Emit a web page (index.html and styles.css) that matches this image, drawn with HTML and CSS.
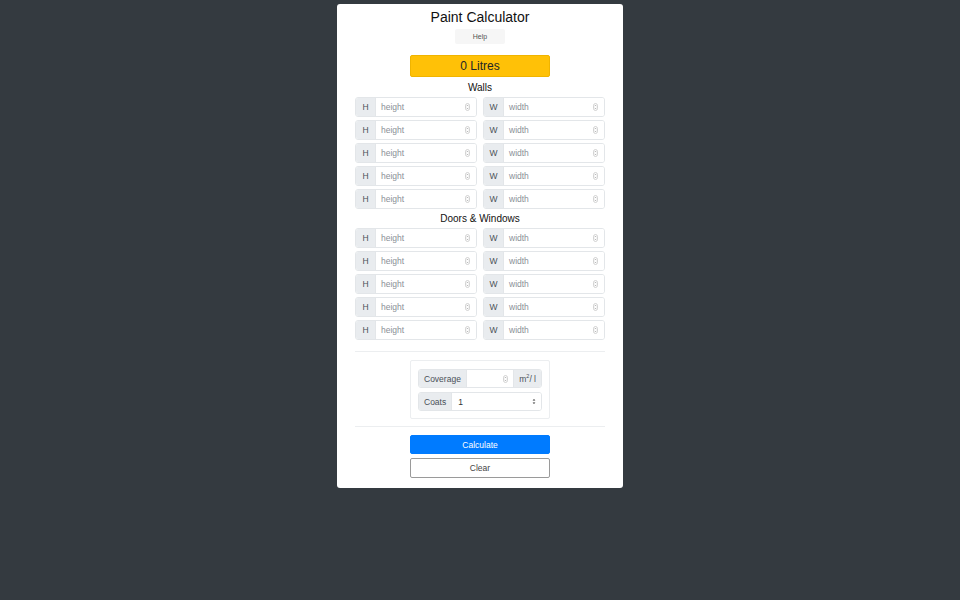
FILE: index.html
```html
<!DOCTYPE html>
<html>
<head>
<meta charset="utf-8">
<link rel="stylesheet" href="styles.css">
</head>
<body>
<div class="card">
  <h1 class="title">Paint Calculator</h1>
  <button class="btn-help">Help</button>
  <div class="result">0 Litres</div>

  <h2 class="section">Walls</h2>
  <div class="rows">
    <div class="row">
      <div class="group"><span class="pre">H</span><div class="field"><span class="ph">height</span><svg class="spin" viewBox="0 0 5 8"><rect x="0.5" y="0.5" width="4" height="7" rx="2" fill="none" stroke="#b8b8b8" stroke-width="0.6"/><path d="M1.6 3.2 L2.5 2.2 L3.4 3.2 M1.6 4.8 L2.5 5.8 L3.4 4.8" fill="none" stroke="#888" stroke-width="0.6"/></svg></div></div>
      <div class="group"><span class="pre">W</span><div class="field"><span class="ph">width</span><svg class="spin" viewBox="0 0 5 8"><rect x="0.5" y="0.5" width="4" height="7" rx="2" fill="none" stroke="#b8b8b8" stroke-width="0.6"/><path d="M1.6 3.2 L2.5 2.2 L3.4 3.2 M1.6 4.8 L2.5 5.8 L3.4 4.8" fill="none" stroke="#888" stroke-width="0.6"/></svg></div></div>
    </div>
    <div class="row">
      <div class="group"><span class="pre">H</span><div class="field"><span class="ph">height</span><svg class="spin" viewBox="0 0 5 8"><rect x="0.5" y="0.5" width="4" height="7" rx="2" fill="none" stroke="#b8b8b8" stroke-width="0.6"/><path d="M1.6 3.2 L2.5 2.2 L3.4 3.2 M1.6 4.8 L2.5 5.8 L3.4 4.8" fill="none" stroke="#888" stroke-width="0.6"/></svg></div></div>
      <div class="group"><span class="pre">W</span><div class="field"><span class="ph">width</span><svg class="spin" viewBox="0 0 5 8"><rect x="0.5" y="0.5" width="4" height="7" rx="2" fill="none" stroke="#b8b8b8" stroke-width="0.6"/><path d="M1.6 3.2 L2.5 2.2 L3.4 3.2 M1.6 4.8 L2.5 5.8 L3.4 4.8" fill="none" stroke="#888" stroke-width="0.6"/></svg></div></div>
    </div>
    <div class="row">
      <div class="group"><span class="pre">H</span><div class="field"><span class="ph">height</span><svg class="spin" viewBox="0 0 5 8"><rect x="0.5" y="0.5" width="4" height="7" rx="2" fill="none" stroke="#b8b8b8" stroke-width="0.6"/><path d="M1.6 3.2 L2.5 2.2 L3.4 3.2 M1.6 4.8 L2.5 5.8 L3.4 4.8" fill="none" stroke="#888" stroke-width="0.6"/></svg></div></div>
      <div class="group"><span class="pre">W</span><div class="field"><span class="ph">width</span><svg class="spin" viewBox="0 0 5 8"><rect x="0.5" y="0.5" width="4" height="7" rx="2" fill="none" stroke="#b8b8b8" stroke-width="0.6"/><path d="M1.6 3.2 L2.5 2.2 L3.4 3.2 M1.6 4.8 L2.5 5.8 L3.4 4.8" fill="none" stroke="#888" stroke-width="0.6"/></svg></div></div>
    </div>
    <div class="row">
      <div class="group"><span class="pre">H</span><div class="field"><span class="ph">height</span><svg class="spin" viewBox="0 0 5 8"><rect x="0.5" y="0.5" width="4" height="7" rx="2" fill="none" stroke="#b8b8b8" stroke-width="0.6"/><path d="M1.6 3.2 L2.5 2.2 L3.4 3.2 M1.6 4.8 L2.5 5.8 L3.4 4.8" fill="none" stroke="#888" stroke-width="0.6"/></svg></div></div>
      <div class="group"><span class="pre">W</span><div class="field"><span class="ph">width</span><svg class="spin" viewBox="0 0 5 8"><rect x="0.5" y="0.5" width="4" height="7" rx="2" fill="none" stroke="#b8b8b8" stroke-width="0.6"/><path d="M1.6 3.2 L2.5 2.2 L3.4 3.2 M1.6 4.8 L2.5 5.8 L3.4 4.8" fill="none" stroke="#888" stroke-width="0.6"/></svg></div></div>
    </div>
    <div class="row">
      <div class="group"><span class="pre">H</span><div class="field"><span class="ph">height</span><svg class="spin" viewBox="0 0 5 8"><rect x="0.5" y="0.5" width="4" height="7" rx="2" fill="none" stroke="#b8b8b8" stroke-width="0.6"/><path d="M1.6 3.2 L2.5 2.2 L3.4 3.2 M1.6 4.8 L2.5 5.8 L3.4 4.8" fill="none" stroke="#888" stroke-width="0.6"/></svg></div></div>
      <div class="group"><span class="pre">W</span><div class="field"><span class="ph">width</span><svg class="spin" viewBox="0 0 5 8"><rect x="0.5" y="0.5" width="4" height="7" rx="2" fill="none" stroke="#b8b8b8" stroke-width="0.6"/><path d="M1.6 3.2 L2.5 2.2 L3.4 3.2 M1.6 4.8 L2.5 5.8 L3.4 4.8" fill="none" stroke="#888" stroke-width="0.6"/></svg></div></div>
    </div>
  </div>

  <h2 class="section section-doors">Doors &amp; Windows</h2>
  <div class="rows">
    <div class="row">
      <div class="group"><span class="pre">H</span><div class="field"><span class="ph">height</span><svg class="spin" viewBox="0 0 5 8"><rect x="0.5" y="0.5" width="4" height="7" rx="2" fill="none" stroke="#b8b8b8" stroke-width="0.6"/><path d="M1.6 3.2 L2.5 2.2 L3.4 3.2 M1.6 4.8 L2.5 5.8 L3.4 4.8" fill="none" stroke="#888" stroke-width="0.6"/></svg></div></div>
      <div class="group"><span class="pre">W</span><div class="field"><span class="ph">width</span><svg class="spin" viewBox="0 0 5 8"><rect x="0.5" y="0.5" width="4" height="7" rx="2" fill="none" stroke="#b8b8b8" stroke-width="0.6"/><path d="M1.6 3.2 L2.5 2.2 L3.4 3.2 M1.6 4.8 L2.5 5.8 L3.4 4.8" fill="none" stroke="#888" stroke-width="0.6"/></svg></div></div>
    </div>
    <div class="row">
      <div class="group"><span class="pre">H</span><div class="field"><span class="ph">height</span><svg class="spin" viewBox="0 0 5 8"><rect x="0.5" y="0.5" width="4" height="7" rx="2" fill="none" stroke="#b8b8b8" stroke-width="0.6"/><path d="M1.6 3.2 L2.5 2.2 L3.4 3.2 M1.6 4.8 L2.5 5.8 L3.4 4.8" fill="none" stroke="#888" stroke-width="0.6"/></svg></div></div>
      <div class="group"><span class="pre">W</span><div class="field"><span class="ph">width</span><svg class="spin" viewBox="0 0 5 8"><rect x="0.5" y="0.5" width="4" height="7" rx="2" fill="none" stroke="#b8b8b8" stroke-width="0.6"/><path d="M1.6 3.2 L2.5 2.2 L3.4 3.2 M1.6 4.8 L2.5 5.8 L3.4 4.8" fill="none" stroke="#888" stroke-width="0.6"/></svg></div></div>
    </div>
    <div class="row">
      <div class="group"><span class="pre">H</span><div class="field"><span class="ph">height</span><svg class="spin" viewBox="0 0 5 8"><rect x="0.5" y="0.5" width="4" height="7" rx="2" fill="none" stroke="#b8b8b8" stroke-width="0.6"/><path d="M1.6 3.2 L2.5 2.2 L3.4 3.2 M1.6 4.8 L2.5 5.8 L3.4 4.8" fill="none" stroke="#888" stroke-width="0.6"/></svg></div></div>
      <div class="group"><span class="pre">W</span><div class="field"><span class="ph">width</span><svg class="spin" viewBox="0 0 5 8"><rect x="0.5" y="0.5" width="4" height="7" rx="2" fill="none" stroke="#b8b8b8" stroke-width="0.6"/><path d="M1.6 3.2 L2.5 2.2 L3.4 3.2 M1.6 4.8 L2.5 5.8 L3.4 4.8" fill="none" stroke="#888" stroke-width="0.6"/></svg></div></div>
    </div>
    <div class="row">
      <div class="group"><span class="pre">H</span><div class="field"><span class="ph">height</span><svg class="spin" viewBox="0 0 5 8"><rect x="0.5" y="0.5" width="4" height="7" rx="2" fill="none" stroke="#b8b8b8" stroke-width="0.6"/><path d="M1.6 3.2 L2.5 2.2 L3.4 3.2 M1.6 4.8 L2.5 5.8 L3.4 4.8" fill="none" stroke="#888" stroke-width="0.6"/></svg></div></div>
      <div class="group"><span class="pre">W</span><div class="field"><span class="ph">width</span><svg class="spin" viewBox="0 0 5 8"><rect x="0.5" y="0.5" width="4" height="7" rx="2" fill="none" stroke="#b8b8b8" stroke-width="0.6"/><path d="M1.6 3.2 L2.5 2.2 L3.4 3.2 M1.6 4.8 L2.5 5.8 L3.4 4.8" fill="none" stroke="#888" stroke-width="0.6"/></svg></div></div>
    </div>
    <div class="row">
      <div class="group"><span class="pre">H</span><div class="field"><span class="ph">height</span><svg class="spin" viewBox="0 0 5 8"><rect x="0.5" y="0.5" width="4" height="7" rx="2" fill="none" stroke="#b8b8b8" stroke-width="0.6"/><path d="M1.6 3.2 L2.5 2.2 L3.4 3.2 M1.6 4.8 L2.5 5.8 L3.4 4.8" fill="none" stroke="#888" stroke-width="0.6"/></svg></div></div>
      <div class="group"><span class="pre">W</span><div class="field"><span class="ph">width</span><svg class="spin" viewBox="0 0 5 8"><rect x="0.5" y="0.5" width="4" height="7" rx="2" fill="none" stroke="#b8b8b8" stroke-width="0.6"/><path d="M1.6 3.2 L2.5 2.2 L3.4 3.2 M1.6 4.8 L2.5 5.8 L3.4 4.8" fill="none" stroke="#888" stroke-width="0.6"/></svg></div></div>
    </div>
  </div>

  <hr class="divider divider-top">

  <div class="settings">
    <div class="group group-cov">
      <span class="pre pre-wide">Coverage</span>
      <div class="field field-cov"><span class="ph"></span><svg class="spin" viewBox="0 0 5 8"><rect x="0.5" y="0.5" width="4" height="7" rx="2" fill="none" stroke="#b8b8b8" stroke-width="0.6"/><path d="M1.6 3.2 L2.5 2.2 L3.4 3.2 M1.6 4.8 L2.5 5.8 L3.4 4.8" fill="none" stroke="#888" stroke-width="0.6"/></svg></div>
      <span class="post">m<span class="sup">2</span>/ l</span>
    </div>
    <div class="group group-coats">
      <span class="pre pre-wide">Coats</span>
      <div class="field field-select"><span class="val">1</span><svg class="sel" viewBox="0 0 4 7"><path d="M0.6 2.6 L2 1 L3.4 2.6 Z M0.6 4.4 L2 6 L3.4 4.4 Z" fill="#333"/></svg></div>
    </div>
  </div>

  <hr class="divider divider-bottom">

  <div class="actions">
    <button class="btn btn-primary">Calculate</button>
    <button class="btn btn-outline">Clear</button>
  </div>
</div>
</body>
</html>
```

FILE: styles.css
```css
html, body {
  margin: 0;
  padding: 0;
  background: #343a40;
  font-family: "Liberation Sans", Arial, sans-serif;
  color: #212529;
}

.card {
  width: 286px;
  margin: 4px auto 0;
  background: #fff;
  border-radius: 3px;
  padding: 3px 18px 10px;
  box-sizing: border-box;
  display: flex;
  flex-direction: column;
  align-items: center;
}

.title {
  margin: 0;
  font-size: 14px;
  font-weight: 400;
  line-height: 20px;
  color: #111;
}

.btn-help {
  margin-top: 2px;
  width: 50px;
  height: 15px;
  border: none;
  border-radius: 2px;
  background: #f6f6f6;
  font-family: inherit;
  font-size: 7px;
  color: #555;
  padding: 0;
}

.result {
  margin-top: 11px;
  width: 140px;
  height: 22px;
  box-sizing: border-box;
  background: #ffc107;
  border: 1px solid #f0b400;
  border-radius: 2px;
  font-size: 12px;
  line-height: 20px;
  text-align: center;
  color: #212529;
}

.section {
  margin: 3px 0 1px;
  font-size: 10px;
  font-weight: 400;
  line-height: 16px;
  color: #111;
}

.section-doors {
  margin-top: 2px;
}

.rows {
  width: 250px;
  display: flex;
  flex-direction: column;
  gap: 3px;
}

.row {
  display: flex;
  gap: 6px;
}

.group {
  flex: 1;
  display: flex;
  height: 20px;
  box-sizing: border-box;
  border: 1px solid #e3e6e9;
  border-radius: 3px;
  overflow: hidden;
  font-size: 8.5px;
}

.pre {
  width: 19px;
  flex: none;
  background: #e9ecef;
  border-right: 1px solid #e3e6e9;
  display: flex;
  align-items: center;
  justify-content: center;
  color: #495057;
}

.field {
  flex: 1;
  display: flex;
  align-items: center;
  padding: 0 6px 0 5px;
  background: #fff;
}

.ph {
  flex: 1;
  color: #8a9097;
}

.spin {
  width: 5px;
  height: 8px;
  flex: none;
}

.divider {
  width: 250px;
  border: none;
  border-top: 1px solid #eceef0;
  margin: 0;
}

.divider-top {
  margin-top: 11px;
}

.settings {
  margin-top: 8px;
  width: 140px;
  box-sizing: border-box;
  border: 1px solid #eceef0;
  border-radius: 2px;
  padding: 8px 7px 7px;
  display: flex;
  flex-direction: column;
  gap: 4px;
}

.settings .group {
  flex: none;
  height: 19px;
  font-size: 8.5px;
}

.pre-wide {
  width: auto;
  padding: 0 5px;
}

.field-cov {
  padding: 0 5px 0 5px;
}

.post {
  flex: none;
  background: #e9ecef;
  border-left: 1px solid #e3e6e9;
  display: flex;
  align-items: center;
  padding: 0 5px;
  color: #495057;
}

.sup {
  font-size: 5.5px;
  position: relative;
  top: -3px;
}

.field-select {
  padding: 0 5px 0 6px;
}

.val {
  flex: 1;
  color: #333;
}

.sel {
  width: 4px;
  height: 7px;
  flex: none;
}

.divider-bottom {
  margin-top: 7px;
}

.actions {
  margin-top: 8px;
  width: 140px;
  display: flex;
  flex-direction: column;
  gap: 4px;
}

.btn {
  font-family: inherit;
  font-size: 8.5px;
  border-radius: 2px;
  padding: 0;
  box-sizing: border-box;
}

.btn-primary {
  height: 19px;
  background: #007bff;
  border: 1px solid #007bff;
  color: #fff;
}

.btn-outline {
  height: 20px;
  background: #fff;
  border: 1px solid #9a9a9a;
  color: #444;
}
```
